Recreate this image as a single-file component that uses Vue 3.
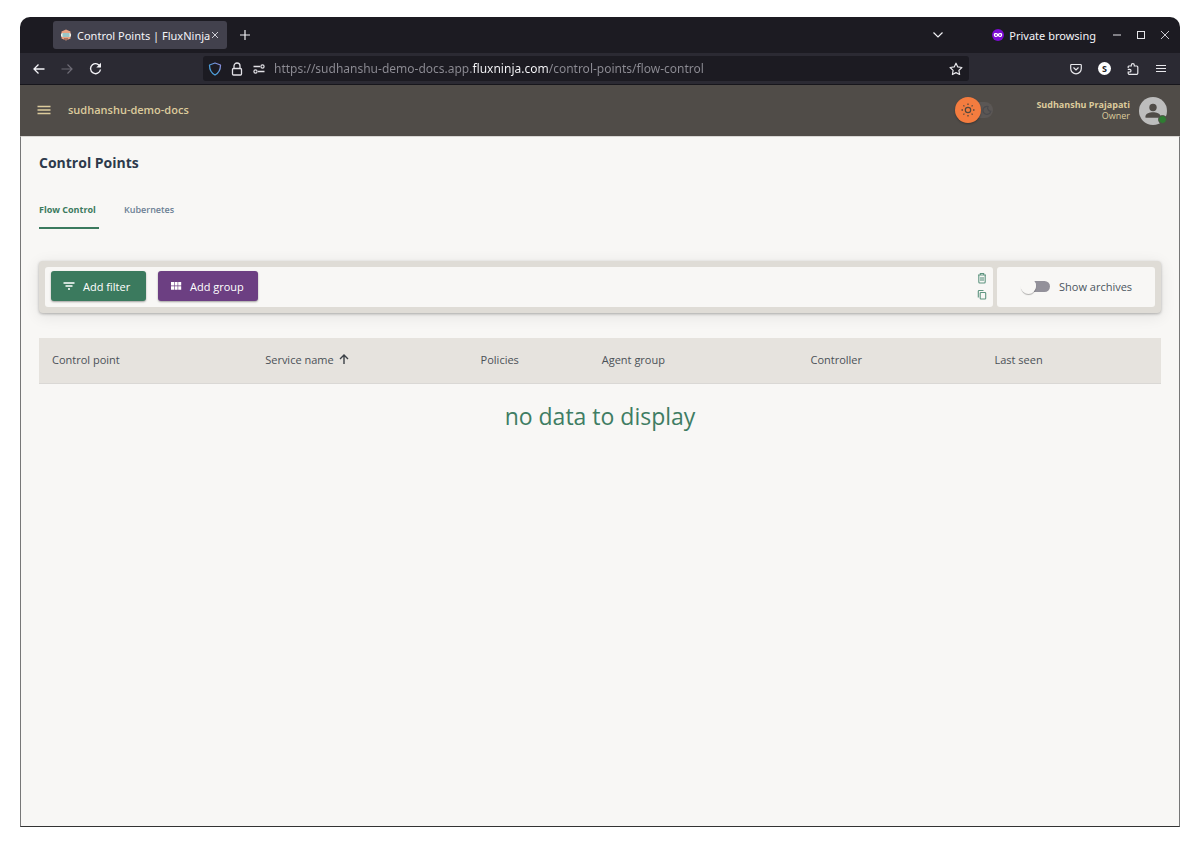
<script setup>
import { ref } from 'vue'

const address = ref('https://sudhanshu-demo-docs.app.fluxninja.com/control-points/flow-control')
const tabs = ['Flow Control', 'Kubernetes']
const activeTab = ref('Flow Control')
const showArchives = ref(false)
const columns = [
  { label: 'Control point', width: '19%' },
  { label: 'Service name', width: '19.2%', sorted: true },
  { label: 'Policies', width: '10.8%' },
  { label: 'Agent group', width: '18.6%' },
  { label: 'Controller', width: '16.4%' },
  { label: 'Last seen', width: '16%' },
]
</script>

<template>
  <div class="window">
    <div class="tabbar">
      <div class="browser-tab">
        <svg class="favicon" viewBox="0 0 12 12" width="12" height="12">
          <path d="M6 0.5 10.5 2.5V9.5L6 11.5 1.5 9.5V2.5Z" fill="#e9a283" />
          <rect x="1" y="4" width="10" height="4" rx="1.5" fill="#f4f1e8" />
          <path d="M2.5 5h7M2.5 7h7" stroke="#3f9aa5" stroke-width="1" />
          <path d="M4 10h4" stroke="#68443d" stroke-width="1" />
        </svg>
        <span class="browser-tab-title">Control Points | FluxNinja</span>
        <button class="icon-btn" aria-label="Close tab">
          <svg viewBox="0 0 8 8" width="8" height="8"><path d="M1 1l6 6M7 1L1 7" stroke="#cfced6" fill="none" /></svg>
        </button>
      </div>
      <button class="icon-btn new-tab" aria-label="New tab">
        <svg viewBox="0 0 12 12" width="12" height="12"><path d="M6 1v10M1 6h10" stroke="#f0f0f4" stroke-width="1.2" fill="none" /></svg>
      </button>
      <div class="window-controls">
        <button class="icon-btn tab-list" aria-label="List all tabs">
          <svg viewBox="0 0 12 8" width="12" height="8"><path d="M1.500 1.500 6 6l4.500-4.500" stroke="#f0f0f4" stroke-width="1.200" fill="none" /></svg>
        </button>
        <svg class="mask" viewBox="0 0 12 12" width="12" height="12">
          <circle cx="6" cy="6" r="6" fill="#7d0bd3" />
          <path d="M6 5C5 3.700 2 3.500 1.800 5.500 1.800 8.500 4.800 8.800 6 7 7.200 8.800 10.200 8.500 10.200 5.500 10 3.500 7 3.700 6 5Z" fill="#fff" />
          <ellipse cx="4" cy="6.100" rx="1.100" ry="0.800" fill="#7d0bd3" />
          <ellipse cx="8" cy="6.100" rx="1.100" ry="0.800" fill="#7d0bd3" />
        </svg>
        <span class="private">Private browsing</span>
        <button class="icon-btn" aria-label="Minimize">
          <svg viewBox="0 0 10 10" width="10" height="10"><path d="M1 5h8" stroke="#e4e4e8" fill="none" /></svg>
        </button>
        <button class="icon-btn" aria-label="Maximize">
          <svg viewBox="0 0 10 10" width="10" height="10"><rect x="1.500" y="1.500" width="7" height="7" stroke="#e4e4e8" fill="none" /></svg>
        </button>
        <button class="icon-btn" aria-label="Close window">
          <svg viewBox="0 0 10 10" width="10" height="10"><path d="M1 1l8 8M9 1L1 9" stroke="#c9c8cf" fill="none" /></svg>
        </button>
      </div>
    </div>

    <div class="navbar">
      <div class="nav-buttons">
        <button class="icon-btn" aria-label="Back">
          <svg viewBox="0 0 12 12" width="12" height="12"><path d="M11.500 6H1M5.500 1.500 1 6l4.500 4.500" stroke="#f4f4f8" stroke-width="1.300" fill="none" /></svg>
        </button>
        <button class="icon-btn" aria-label="Forward" disabled>
          <svg viewBox="0 0 12 12" width="12" height="12"><path d="M.5 6H11M6.500 1.500 11 6l-4.500 4.500" stroke="#6d6b75" stroke-width="1.200" fill="none" /></svg>
        </button>
        <button class="icon-btn" aria-label="Reload">
          <svg viewBox="0 0 13 13" width="13" height="13"><path d="M11.300 5A5 5 0 1 0 11.500 7.500" stroke="#f4f4f8" stroke-width="1.400" fill="none" /><path d="M12 .8V5.500H7.300Z" fill="#f4f4f8" /></svg>
        </button>
      </div>
      <div class="urlbar">
        <svg viewBox="0 0 14 14" width="14" height="14">
          <defs><linearGradient id="shield" x1="1" y1="0" x2="0" y2="1"><stop offset="0" stop-color="#9389d8" /><stop offset=".6" stop-color="#4b9bd6" /></linearGradient></defs>
          <path d="M7 1 12.500 3C12.500 8 11 11 7 13 3 11 1.500 8 1.500 3Z" stroke="url(#shield)" stroke-width="1.300" stroke-linejoin="round" fill="none" />
        </svg>
        <svg viewBox="0 0 14 14" width="14" height="14"><rect x="2.500" y="6.500" width="9" height="6.500" rx="1" stroke="#e2e1e6" stroke-width="1.300" fill="none" /><path d="M4 6.500V4a3 3 0 0 1 6 0V6.500" stroke="#e2e1e6" stroke-width="1.300" fill="none" /></svg>
        <svg viewBox="0 0 14 14" width="14" height="14"><path d="M1.500 4.500H8M6 9.500h6.500" stroke="#e2e1e6" stroke-width="1.300" /><circle cx="10.500" cy="4.500" r="1.600" stroke="#e2e1e6" stroke-width="1.200" fill="none" /><circle cx="3.500" cy="9.500" r="1.600" stroke="#e2e1e6" stroke-width="1.200" fill="none" /></svg>
        <input v-model="address" class="address" type="text" aria-label="Address" />
        <button class="icon-btn" aria-label="Bookmark this page">
          <svg viewBox="0 0 14 14" width="14" height="14"><path d="M7 1.200 8.800 4.900 12.900 5.500 9.900 8.400 10.600 12.500 7 10.600 3.400 12.500 4.100 8.400 1.100 5.500 5.200 4.900Z" stroke="#e8e8ec" stroke-width="1.200" stroke-linejoin="round" fill="none" /></svg>
        </button>
      </div>
      <div class="nav-tools">
        <button class="icon-btn" aria-label="Save to Pocket">
          <svg viewBox="0 0 12 12" width="12" height="12"><path d="M1.500 1.500h9a.8.8 0 0 1 .8.800V5.500a5.300 5.300 0 0 1-10.600 0V2.300a.8.8 0 0 1 .8-.8Z" stroke="#e8e8ec" stroke-width="1.200" fill="none" /><path d="M3.500 4.500 6 7l2.500-2.500" stroke="#e8e8ec" stroke-width="1.200" fill="none" /></svg>
        </button>
        <button class="icon-btn account" aria-label="Account">S</button>
        <button class="icon-btn" aria-label="Extensions">
          <svg viewBox="0 0 12 12" width="12" height="12"><path d="M1.200 5V3.800a.8.8 0 0 1 .8-.8H4.300V2.200a1.500 1.500 0 0 1 3 0V3H9.800a1 1 0 0 1 1 1V10.300a1 1 0 0 1-1 1H2.200a1 1 0 0 1-1-1V9H2.700a1.300 1.300 0 0 0 0-2.600H.8" stroke="#e8e8ec" stroke-width="1.200" fill="none" /></svg>
        </button>
        <button class="icon-btn" aria-label="Menu">
          <svg viewBox="0 0 12 12" width="12" height="12"><path d="M1 2.500h10M1 5.500h10M1 8.500h10" stroke="#e8e8ec" stroke-width="1.100" /></svg>
        </button>
      </div>
    </div>

    <header class="app-header">
      <button class="icon-btn" aria-label="Open navigation">
        <svg viewBox="0 0 14 10" width="14" height="10"><path d="M.5 1.500h13M.5 5h13M.5 8.500h13" stroke="#dccb9c" stroke-width="1.300" /></svg>
      </button>
      <span class="org">sudhanshu-demo-docs</span>
      <button class="theme-switch" role="switch" aria-checked="false" aria-label="Dark theme">
        <span class="sun">
          <svg viewBox="0 0 16 16" width="16" height="16"><circle cx="8" cy="8" r="2.700" stroke="#54483c" stroke-width="1.200" fill="none" /><path d="M8 1.500v1.500M8 13v1.500M1.500 8H3M13 8h1.500M3.400 3.400l1 1M11.600 11.600l1 1M3.400 12.600l1-1M11.600 4.400l1-1" stroke="#54483c" stroke-width="1.300" /></svg>
        </span>
        <svg viewBox="0 0 12 12" width="12" height="12"><path d="M7 2.500A4 4 0 1 0 9.800 7.300 3.300 3.300 0 0 1 7 2.500Z" fill="none" stroke="#4b4a4d" stroke-width="1.200" /></svg>
      </button>
      <div class="user">
        <strong>Sudhanshu Prajapati</strong>
        <span>Owner</span>
      </div>
      <div class="avatar">
        <svg viewBox="0 0 28 28" width="28" height="28"><circle cx="14" cy="14" r="14" fill="#bdbdbd" /><circle cx="14" cy="10.500" r="3.700" fill="#504c48" /><path d="M6.500 20.800v-1.500c0-2.600 4.300-4 7.500-4s7.500 1.400 7.500 4V20.800Z" fill="#504c48" /></svg>
        <span class="status"></span>
      </div>
    </header>

    <main class="page">
      <h1>Control Points</h1>
      <nav class="tabs" role="tablist">
        <button
          v-for="tab in tabs"
          :key="tab"
          class="tab"
          :class="{ active: tab === activeTab }"
          role="tab"
          :aria-selected="tab === activeTab"
          @click="activeTab = tab"
        >{{ tab }}</button>
      </nav>

      <section class="filters">
        <div class="filter-box">
          <button class="action green">
            <svg viewBox="0 0 12 12" width="12" height="12"><path d="M.5 3h11M2.500 6h7M5 9h2" stroke="#fff" stroke-width="1.300" /></svg>
            Add filter
          </button>
          <button class="action purple">
            <svg viewBox="0 0 12 12" width="12" height="12"><path d="M1 2h3v3.600H1zM4.600 2h3v3.600h-3zM8.200 2h3v3.600h-3zM1 6.200h3v3.600H1zM4.600 6.200h3v3.600h-3zM8.200 6.200h3v3.600h-3z" fill="#fff" /></svg>
            Add group
          </button>
          <div class="box-tools">
            <button class="icon-btn" aria-label="Clear filters">
              <svg viewBox="0 0 10 12" width="10" height="12"><path d="M1 3h8M3.300 3V1.500h3.400V3M1.800 3v7a1 1 0 0 0 1 1h4.400a1 1 0 0 0 1-1V3M4 5v4M6 5v4" stroke="#5f9580" stroke-width="1.100" fill="none" /></svg>
            </button>
            <button class="icon-btn" aria-label="Copy filters">
              <svg viewBox="0 0 10 12" width="10" height="12"><rect x="3.200" y="3.500" width="5.500" height="6.500" rx=".8" stroke="#5f9580" stroke-width="1.100" fill="none" /><path d="M1.300 8.500V2.300a.8.8 0 0 1 .8-.8H6.500" stroke="#5f9580" stroke-width="1.100" fill="none" /></svg>
            </button>
          </div>
        </div>
        <label class="archive-box">
          <input v-model="showArchives" class="switch" type="checkbox" role="switch" />
          Show archives
        </label>
      </section>

      <table>
        <colgroup>
          <col v-for="c in columns" :key="c.label" :style="{ width: c.width }" />
        </colgroup>
        <thead>
          <tr>
            <th v-for="c in columns" :key="c.label" scope="col">
              <span class="head-cell">
                {{ c.label }}
                <svg v-if="c.sorted" viewBox="0 0 10 10" width="10" height="10"><path d="M5 10V1M1 5l4-4 4 4" stroke="#3b4046" stroke-width="1.400" fill="none" /></svg>
              </span>
            </th>
          </tr>
        </thead>
        <tbody>
          <tr><td class="empty" :colspan="columns.length">no data to display</td></tr>
        </tbody>
      </table>
    </main>
  </div>
</template>

<style>
body { background: #fff; }
</style>

<style scoped>
* { box-sizing: border-box; }
button, input { font: inherit; margin: 0; }
svg { display: block; flex: none; }
.icon-btn { display: flex; align-items: center; justify-content: center; padding: 0; border: 0; background: none; flex: none; }

.window {
  display: flex; flex-direction: column;
  min-height: calc(100vh - 39px);
  margin: 17px 20px 22px;
  border-radius: 10px 10px 0 0;
  overflow: hidden;
  background: #f8f7f5;
  color: #4b5560;
  font-family: "Open Sans", "Noto Sans", sans-serif;
  font-size: 11px;
}

.tabbar {
  display: flex; align-items: center;
  height: 36px; padding: 0 10px 0 33px;
  background: #1c1b22; color: #f4f4f8;
  font-family: "Noto Sans", sans-serif; font-size: 11px;
}
.browser-tab { display: flex; align-items: center; width: 174px; height: 28px; padding: 0 8px 0 7px; border-radius: 3px; background: #42414d; }
.browser-tab-title { flex: 1; margin-left: 5px; white-space: nowrap; }
.new-tab { margin-left: 12px; }
.window-controls { display: flex; align-items: center; gap: 14px; margin-left: auto; }
.tab-list { margin-right: 34px; }
.private { margin-left: -9px; margin-right: 2px; white-space: nowrap; }

.navbar {
  display: flex; align-items: center;
  height: 32px; padding: 0 13px;
  background: #2b2a33; border-bottom: 1px solid #17161c;
}
.nav-buttons { display: flex; align-items: center; gap: 16px; width: 170px; }
.urlbar { display: flex; align-items: center; gap: 8px; flex: 1; height: 25px; padding: 0 6px 0 5px; border-radius: 3px; background: #1c1b22; }
.address {
  flex: 1; min-width: 0; padding: 0; border: 0; outline: 0;
  font-family: "Noto Sans", sans-serif; font-size: 12px; line-height: 20px;
  color: transparent;
  background: linear-gradient(90deg, #8d8c94 0 198px, #fbfbfe 198px 274px, #8d8c94 274px);
  -webkit-background-clip: text; background-clip: text;
}
.nav-tools { display: flex; align-items: center; gap: 16px; margin-left: 101px; }
.account { width: 13px; height: 13px; border-radius: 50%; background: #fff; color: #222; font-size: 9px; font-weight: 700; line-height: 13px; }

.app-header {
  display: flex; align-items: center;
  height: 51px; padding: 0 13px 2px 17px;
  background: #504c48; color: #dccb9c;
}
.org { margin-left: 17px; font-weight: 600; }
.theme-switch { display: flex; align-items: center; height: 16px; margin-left: auto; margin-right: 43px; padding: 0; border: 0; border-radius: 8px; background: #5b5755; }
.sun { display: flex; align-items: center; justify-content: center; width: 26px; height: 26px; border-radius: 50%; background: #f47c3f; box-shadow: 0 1px 2px rgba(0, 0, 0, .3); }
.user { display: flex; flex-direction: column; align-items: flex-end; font-size: 9px; line-height: 11px; }
.avatar { position: relative; margin-top: 2px; margin-left: 9px; }
.status { position: absolute; right: 0; bottom: 1px; width: 9px; height: 9px; border: 1px solid #504c48; border-radius: 50%; background: #2e7d32; }

.page { flex: 1; padding: 16px 18px; border: 1px solid #777; border-top-color: #d8d6d3; border-bottom-color: #333; }
h1 { margin: 0; color: #2d3a4b; font-size: 14px; line-height: 20px; font-weight: 700; }
.tabs { display: flex; gap: 25px; margin-top: 19px; }
.tab { min-width: 60px; height: 37px; padding: 0; border: 0; border-bottom: 2px solid transparent; background: none; color: #6b8094; font-size: 9px; font-weight: 600; text-align: left; }
.tab.active { color: #3b7a5e; border-bottom-color: #3b7a5e; font-weight: 700; }

.filters {
  display: flex; gap: 4px; margin-top: 32px; padding: 6px;
  border-radius: 4px; background: #dfdcd6;
  box-shadow: 0 1px 3px rgba(0, 0, 0, .28), 0 3px 16px rgba(0, 0, 0, .09);
}
.filter-box, .archive-box { display: flex; align-items: center; height: 40px; padding-bottom: 2px; border-radius: 3px; background: #f8f7f5; }
.filter-box { flex: 1; gap: 12px; padding-left: 6px; padding-right: 6px; }
.archive-box { gap: 9px; width: 158px; padding-left: 24px; white-space: nowrap; }
.action { display: flex; align-items: center; gap: 8px; min-width: 95px; height: 30px; padding: 0 12px; border: 0; border-radius: 3px; color: #fff; box-shadow: 0 1px 2px rgba(0, 0, 0, .35); white-space: nowrap; }
.green { background: #3b7a5e; }
.purple { min-width: 100px; background: #6c3f82; }
.box-tools { display: flex; flex-direction: column; gap: 5px; margin-left: auto; }
.switch { appearance: none; position: relative; width: 29px; height: 11px; border-radius: 6px; background: #93919a; }
.switch::before { content: ""; position: absolute; left: 0; top: -2px; width: 15px; height: 15px; border-radius: 50%; background: #f8f7f5; box-shadow: 0 1px 1px rgba(0, 0, 0, .3); }
.switch::after { content: ""; position: absolute; left: -1px; top: -3px; width: 16px; height: 15px; border-radius: 50%; background: #f8f7f5; }
.switch:checked::before, .switch:checked::after { left: 14px; }

table { width: 100%; margin-top: 25px; border-collapse: collapse; table-layout: fixed; }
th { height: 45px; padding: 0 0 2px 13px; border-bottom: 1px solid #dad8d5; background: #e6e3de; color: #4b5157; font-weight: 500; text-align: left; }
.head-cell { display: flex; align-items: center; gap: 5px; }
.empty { padding: 16px 0; color: #3f7d63; font-size: 23px; line-height: 32px; text-align: center; }
</style>
